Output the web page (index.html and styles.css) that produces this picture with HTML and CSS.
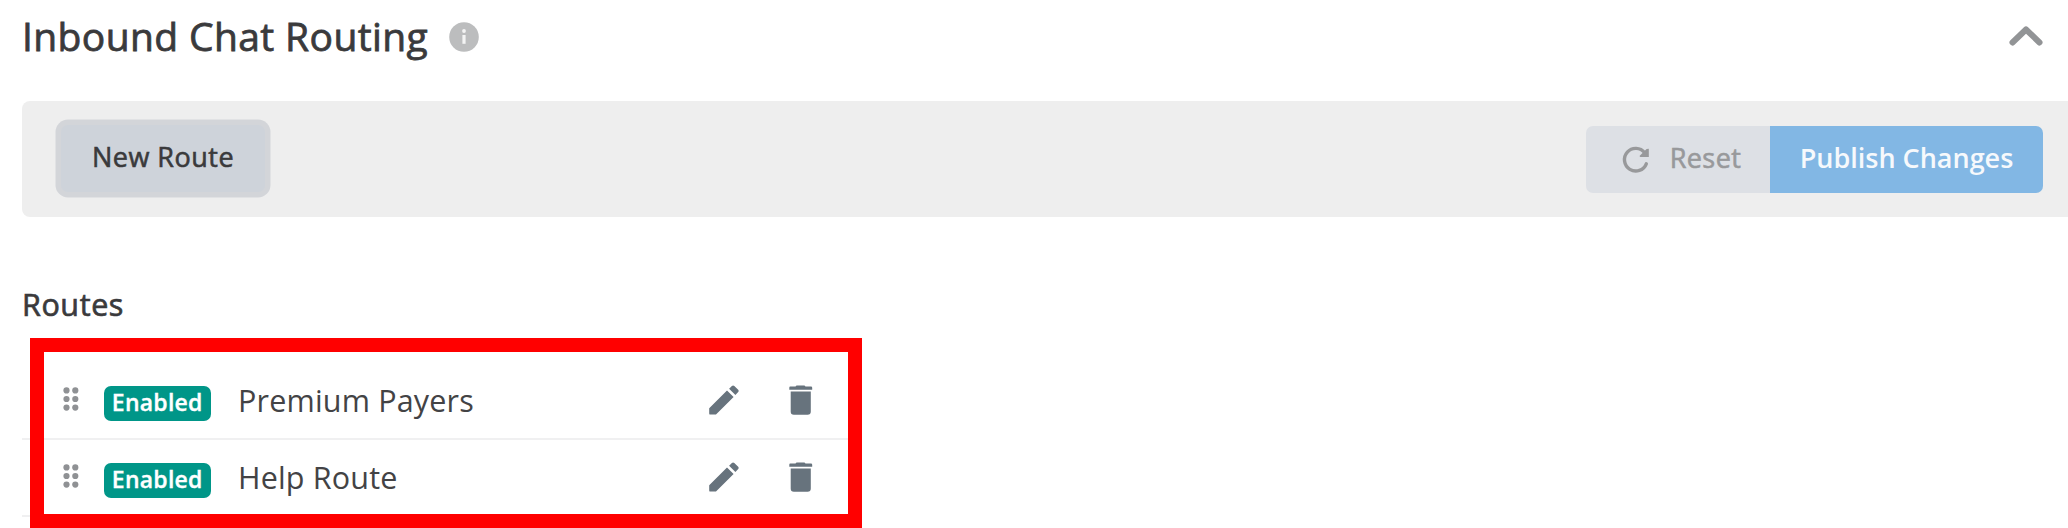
FILE: index.html
```html
<!DOCTYPE html>
<html lang="en">
<head>
<meta charset="utf-8">
<title>Inbound Chat Routing</title>
<link rel="stylesheet" href="styles.css">
</head>
<body>
<svg class="sprite" aria-hidden="true">
  <symbol id="grip" viewBox="0 0 16 24"><g fill="#8f9194"><circle cx="3.5" cy="3.4" r="3.1"/><circle cx="12.3" cy="3.4" r="3.1"/><circle cx="3.5" cy="12" r="3.1"/><circle cx="12.3" cy="12" r="3.1"/><circle cx="3.5" cy="20.6" r="3.1"/><circle cx="12.3" cy="20.6" r="3.1"/></g></symbol>
  <symbol id="pencil" viewBox="0 0 30 30"><path fill="#67737d" d="M.2 23.2 18 5.4 24.6 12 7 29.6H1.400Q.2 29.600.2 28.400ZM20.100 3.700 22.900.9Q24.100-.1 25.300.9L29.200 4.800Q30.100 6 29.200 7.100L26.400 9.900Z"/></symbol>
  <symbol id="trash" viewBox="0 0 24 30"><path fill="#67737d" d="M1.200 1.500H6.500L7.500.4H15.500L16.500 1.500H22Q23.200 1.500 23.200 2.700V4.800H.3V2.700Q.3 1.500 1.200 1.500ZM1.700 6.600H21.800V26.500Q21.800 29.700 18.600 29.700H4.900Q1.700 29.700 1.700 26.500Z"/></symbol>
</svg>
<main class="panel">
  <header class="header">
    <h1 class="title">Inbound Chat Routing</h1>
    <svg class="info" viewBox="0 0 30 30"><circle cx="15" cy="15" r="14.800" fill="#bcbdbe"/><circle cx="15" cy="9" r="1.900" fill="#f4f4f4"/><path d="M15 13v8.800" stroke="#f4f4f4" stroke-width="3.200"/></svg>
    <svg class="chevron" viewBox="0 0 34 20"><path d="M3.500 16.500 17 3.500 30.500 16.500" fill="none" stroke="#929496" stroke-width="6" stroke-linecap="round" stroke-linejoin="round"/></svg>
  </header>
  <div class="toolbar">
    <button class="btn new-route">New Route</button>
    <div class="actions">
      <button class="btn reset"><svg class="reload" viewBox="0 0 28 28"><path d="M22.700 6.800A11.300 11.300 0 1 0 24.300 17.800" fill="none" stroke="#98999b" stroke-width="3.400" stroke-linecap="round"/><path d="M26.800 2.700V11H18.400Q17 10.700 18 9.500L24.600 2.900Z" fill="#98999b"/></svg><span>Reset</span></button>
      <button class="btn publish">Publish Changes</button>
    </div>
  </div>
  <section class="routes">
    <h2 class="subtitle">Routes</h2>
    <div class="list">
      <div class="row"><svg class="grip"><use href="#grip"/></svg><span class="badge">Enabled</span><span class="name">Premium Payers</span><svg class="pencil"><use href="#pencil"/></svg><svg class="trash"><use href="#trash"/></svg></div>
      <div class="row"><svg class="grip"><use href="#grip"/></svg><span class="badge">Enabled</span><span class="name">Help Route</span><svg class="pencil"><use href="#pencil"/></svg><svg class="trash"><use href="#trash"/></svg></div>
      <div class="highlight"></div>
    </div>
  </section>
</main>
</body>
</html>
```

FILE: styles.css
```css
* { box-sizing: border-box; }
html { background: #fff; }
body { margin: 0; height: 528px; font-family: "Open Sans", sans-serif; color: #3a3a3c; overflow: hidden; }
svg { display: block; flex: none; }
.sprite { width: 0; height: 0; position: absolute; }
.panel { height: 528px; padding-left: 22px; overflow: hidden; }
.header { display: flex; align-items: center; height: 101px; padding: 0 25px 27px 0; }
.title { margin: 0 0 3px; font-size: 39px; line-height: 54px; font-weight: 400; letter-spacing: .38px; -webkit-text-stroke: .8px currentColor; white-space: nowrap; width: 427px; }
.info { width: 30px; height: 30px; }
.chevron { width: 34px; height: 20px; margin: 0 0 2px auto; }
.toolbar { display: flex; align-items: center; justify-content: space-between; height: 116px; padding: 1px 25px 0 39px; background: #eee; border-radius: 8px 0 0 8px; }
.btn { display: flex; align-items: center; justify-content: center; height: 67px; padding: 0 0 4px; border: 0; font: 400 27px/38px "Open Sans", sans-serif; color: #3a3a3c; white-space: nowrap; }
.new-route { width: 204px; margin-bottom: 2px; background: #ced3da; border-radius: 7px; box-shadow: 0 0 0 5.5px #d3d5d9; letter-spacing: .5px; -webkit-text-stroke: .6px currentColor; }
.actions { display: flex; }
.reset { width: 184px; background: #dde0e5; color: #98999b; border-radius: 7px 0 0 7px; letter-spacing: .45px; -webkit-text-stroke: .6px currentColor; }
.reload { width: 28px; height: 28px; margin: 4px 20px 0 7px; }
.publish { width: 273px; background: #82b7e4; color: #f6f9fc; font-weight: 600; border-radius: 0 7px 7px 0; }
.routes { padding-top: 65px; }
.subtitle { margin: 0 0 1px; font-size: 30.500px; line-height: 44px; font-weight: 400; letter-spacing: .6px; -webkit-text-stroke: .7px currentColor; }
.list { position: relative; width: 840px; padding-top: 36px; }
.row { display: flex; align-items: center; height: 77px; padding: 0 49.5px 2px 41px; border-bottom: 2px solid #f0f0f1; }
.grip { width: 16px; height: 24px; margin: 0 24.5px 2px 0; }
.badge { width: 107.5px; height: 35px; margin-top: 7px; border-radius: 7px; background: #009688; color: #fff; font-size: 23px; line-height: 33px; font-weight: 600; letter-spacing: .25px; -webkit-text-stroke: .35px currentColor; text-align: center; }
.name { margin-left: 27px; font-size: 30.500px; line-height: 42px; letter-spacing: .18px; color: #434345; }
.pencil { width: 30px; height: 30px; margin-left: auto; }
.trash { width: 24px; height: 30px; margin-left: 50px; }
.highlight { position: absolute; left: 8px; top: 11px; width: 832px; height: 190px; border: 14px solid #f00; }
```
